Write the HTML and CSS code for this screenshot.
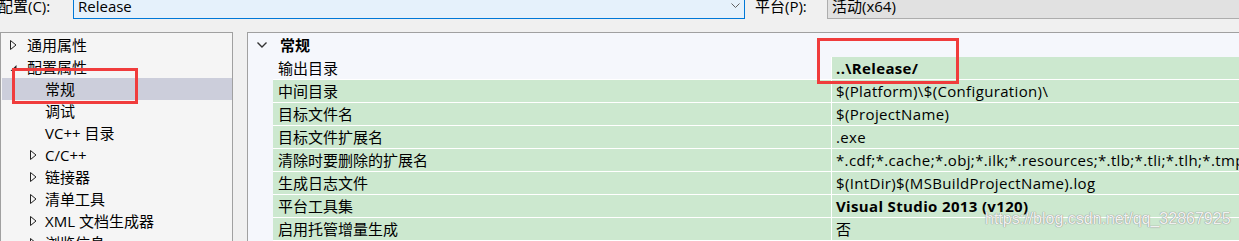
FILE: index.html
```html
<!DOCTYPE html>
<html lang="zh-CN">
<head>
    <meta charset="UTF-8">
    <title>属性页</title>
    <link rel="stylesheet" href="styles.css">
</head>
<body>
    <div class="toolbar">
        <span class="label label-config">配置(C):</span>
        <div class="combo combo-config">
            <span>Release</span>
            <svg class="combo-arrow" width="9" height="6" viewBox="0 0 9 6"><polyline points="0.5,0.5 4.5,4.5 8.5,0.5" fill="none" stroke="#606060" stroke-width="1"/></svg>
        </div>
        <span class="label label-platform">平台(P):</span>
        <div class="combo combo-platform"><span>活动(x64)</span></div>
    </div>

    <div class="main">
        <div class="tree">
            <div class="node lvl1"><svg class="arrow" width="7" height="10" viewBox="0 0 7 10"><polygon points="0.5,0.5 6,5 0.5,9.5" fill="none" stroke="#222" stroke-width="1"/></svg>通用属性</div>
            <div class="node lvl1"><svg class="arrow" width="7" height="10" viewBox="0 0 7 10"><polygon points="6.5,3 6.5,9 0.5,9" fill="#222"/></svg>配置属性</div>
            <div class="node lvl2 selected">常规</div>
            <div class="node lvl2">调试</div>
            <div class="node lvl2">VC++ 目录</div>
            <div class="node lvl2 has-arrow"><svg class="arrow" width="7" height="10" viewBox="0 0 7 10"><polygon points="0.5,0.5 6,5 0.5,9.5" fill="none" stroke="#222" stroke-width="1"/></svg>C/C++</div>
            <div class="node lvl2 has-arrow"><svg class="arrow" width="7" height="10" viewBox="0 0 7 10"><polygon points="0.5,0.5 6,5 0.5,9.5" fill="none" stroke="#222" stroke-width="1"/></svg>链接器</div>
            <div class="node lvl2 has-arrow"><svg class="arrow" width="7" height="10" viewBox="0 0 7 10"><polygon points="0.5,0.5 6,5 0.5,9.5" fill="none" stroke="#222" stroke-width="1"/></svg>清单工具</div>
            <div class="node lvl2 has-arrow"><svg class="arrow" width="7" height="10" viewBox="0 0 7 10"><polygon points="0.5,0.5 6,5 0.5,9.5" fill="none" stroke="#222" stroke-width="1"/></svg>XML 文档生成器</div>
            <div class="node lvl2 has-arrow"><svg class="arrow" width="7" height="10" viewBox="0 0 7 10"><polygon points="0.5,0.5 6,5 0.5,9.5" fill="none" stroke="#222" stroke-width="1"/></svg>浏览信息</div>
            <div class="mark mark-tree"></div>
        </div>

        <div class="grid">
            <div class="category">
                <svg class="cat-arrow" width="10" height="6" viewBox="0 0 10 6"><polyline points="0.5,0.5 5,5 9.5,0.5" fill="none" stroke="#333" stroke-width="1.4"/></svg>
                常规
            </div>
            <div class="prop first"><div class="name">输出目录</div><div class="value bold">..\Release/</div></div>
            <div class="prop"><div class="name">中间目录</div><div class="value">$(Platform)\$(Configuration)\</div></div>
            <div class="prop"><div class="name">目标文件名</div><div class="value">$(ProjectName)</div></div>
            <div class="prop"><div class="name">目标文件扩展名</div><div class="value">.exe</div></div>
            <div class="prop"><div class="name">清除时要删除的扩展名</div><div class="value">*.cdf;*.cache;*.obj;*.ilk;*.resources;*.tlb;*.tli;*.tlh;*.tmp;*.rsp;*.pgc;*.pgd;$(TargetPath)</div></div>
            <div class="prop"><div class="name">生成日志文件</div><div class="value">$(IntDir)$(MSBuildProjectName).log</div></div>
            <div class="prop"><div class="name">平台工具集</div><div class="value bold">Visual Studio 2013 (v120)</div></div>
            <div class="prop"><div class="name">启用托管增量生成</div><div class="value">否</div></div>
            <div class="mark mark-grid"></div>
            <div class="watermark">https://blog.csdn.net/qq_32867925</div>
        </div>
    </div>
</body>
</html>
```
FILE: styles.css
```css
body {
    margin: 0;
    background-color: #f0f0f0;
    font-family: "Open Sans", "Noto Sans CJK SC", sans-serif;
    font-size: 15px;
    color: #000;
    overflow: hidden;
    width: 1239px;
    height: 241px;
}
.toolbar {
    display: flex;
    height: 32px;
    align-items: flex-start;
}
.label {
    height: 24px;
    line-height: 24px;
    margin-top: -6px;
    white-space: nowrap;
}
.label-config {
    width: 75px;
    margin-left: -2px;
}
.label-platform {
    width: 72px;
    margin-left: 10px;
}
.combo {
    box-sizing: border-box;
    height: 25px;
    margin-top: -6px;
    line-height: 23px;
    padding-left: 4px;
    display: flex;
    align-items: center;
}
.combo-config {
    width: 672px;
    flex-shrink: 0;
    background-color: #e5f1fb;
    border: 1px solid #0078d7;
}
.combo-config span {
    flex: 1;
}
.combo-arrow {
    margin-right: 4px;
    margin-top: -2px;
}
.combo-platform {
    flex: 1;
    margin-right: -10px;
    background-color: #e1e1e1;
    border: 1px solid #adadad;
}
.main {
    display: flex;
    height: 209px;
}
.tree {
    position: relative;
    box-sizing: border-box;
    width: 233px;
    flex-shrink: 0;
    border: 1px solid #a0a0a0;
    border-bottom: none;
    background-color: #f5f5f5;
    padding: 1px 0 0 1px;
}
.node {
    height: 22px;
    line-height: 22px;
    white-space: nowrap;
    display: flex;
    align-items: center;
}
.lvl1 {
    padding-left: 8px;
}
.lvl1 .arrow {
    margin-right: 10px;
}
.lvl2 {
    padding-left: 43px;
}
.lvl2.has-arrow {
    padding-left: 28px;
}
.lvl2 .arrow {
    margin-right: 8px;
}
.selected {
    background-color: #cccedb;
}
.grid {
    position: relative;
    flex: 1;
    min-width: 0;
    margin-left: 14px;
    border-top: 1px solid #a0a0a0;
    border-left: 1px solid #a0a0a0;
    background-color: #f5f7fc;
}
.category {
    height: 24px;
    line-height: 24px;
    font-weight: bold;
    display: flex;
    align-items: center;
    padding-left: 9px;
}
.cat-arrow {
    margin-right: 13px;
}
.prop {
    display: flex;
    height: 22px;
    line-height: 22px;
    border-bottom: 1px solid #ffffff;
    margin-left: 25px;
    white-space: nowrap;
}
.name {
    width: 559px;
    flex-shrink: 0;
    padding-left: 5px;
    box-sizing: border-box;
    background-color: #cce8cf;
    border-right: 1px solid #ffffff;
}
.prop.first .name {
    background-color: transparent;
}
.value {
    flex: 1;
    min-width: 0;
    overflow: hidden;
    padding-left: 4px;
    letter-spacing: 0.35px;
    background-color: #cce8cf;
}
.bold {
    font-weight: bold;
}
.mark {
    position: absolute;
    border: 3px solid #f03c3c;
    box-sizing: border-box;
}
.mark-tree {
    left: 11px;
    top: 35px;
    width: 126px;
    height: 36px;
}
.mark-grid {
    left: 569px;
    top: 5px;
    width: 142px;
    height: 46px;
}
.watermark {
    position: absolute;
    left: 737px;
    top: 177px;
    font-family: "Liberation Sans", Arial, sans-serif;
    font-size: 16px;
    color: rgba(255, 255, 255, 0.9);
    text-shadow: 0 0 1px #8c8c8c, 0 0 1px #8c8c8c;
    white-space: nowrap;
}
```
